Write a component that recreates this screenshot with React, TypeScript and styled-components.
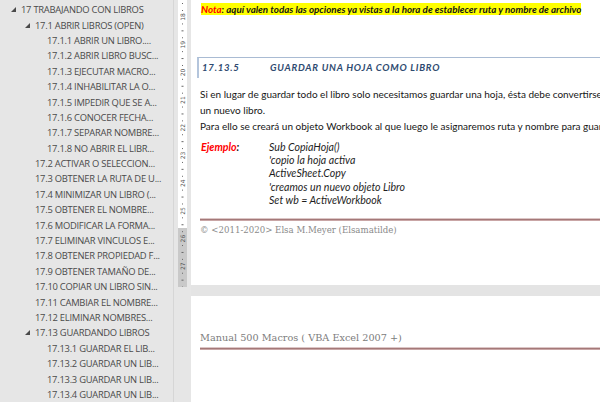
import React from 'react';
import styled, { createGlobalStyle } from 'styled-components';

const GlobalStyle = createGlobalStyle`
  html, body {
    margin: 0;
    padding: 0;
    background: #e6e6e6;
  }
  #root {
    width: 600px;
    height: 402px;
    overflow: hidden;
  }
`;

type NavEntry = { text: string; level: number; open?: boolean };

const navItems: NavEntry[] = [
  { text: '17 TRABAJANDO CON LIBROS', level: 0, open: true },
  { text: '17.1 ABRIR LIBROS (OPEN)', level: 1, open: true },
  { text: '17.1.1 ABRIR UN LIBRO....', level: 2 },
  { text: '17.1.2 ABRIR LIBRO BUSC...', level: 2 },
  { text: '17.1.3 EJECUTAR MACRO...', level: 2 },
  { text: '17.1.4 INHABILITAR LA O...', level: 2 },
  { text: '17.1.5 IMPEDIR QUE SE A...', level: 2 },
  { text: '17.1.6 CONOCER FECHA...', level: 2 },
  { text: '17.1.7 SEPARAR NOMBRE...', level: 2 },
  { text: '17.1.8 NO ABRIR EL LIBR...', level: 2 },
  { text: '17.2 ACTIVAR O SELECCION...', level: 1 },
  { text: '17.3 OBTENER LA RUTA DE U...', level: 1 },
  { text: '17.4 MINIMIZAR UN LIBRO (...', level: 1 },
  { text: '17.5 OBTENER EL NOMBRE...', level: 1 },
  { text: '17.6 MODIFICAR LA FORMA...', level: 1 },
  { text: '17.7 ELIMINAR VINCULOS E...', level: 1 },
  { text: '17.8 OBTENER PROPIEDAD F...', level: 1 },
  { text: '17.9 OBTENER TAMAÑO DE...', level: 1 },
  { text: '17.10 COPIAR UN LIBRO SIN...', level: 1 },
  { text: '17.11 CAMBIAR EL NOMBRE...', level: 1 },
  { text: '17.12 ELIMINAR NOMBRES...', level: 1 },
  { text: '17.13 GUARDANDO LIBROS', level: 1, open: true },
  { text: '17.13.1 GUARDAR EL LIB...', level: 2 },
  { text: '17.13.2 GUARDAR UN LIB...', level: 2 },
  { text: '17.13.3 GUARDAR UN LIB...', level: 2 },
  { text: '17.13.4 GUARDAR UN LIB...', level: 2 }
];

// left edge of the text for each tree level
const textIndent = [21, 35, 47];

const codeLines = [
  'Sub CopiaHoja()',
  "'copio la hoja activa",
  'ActiveSheet.Copy',
  "'creamos un nuevo objeto Libro",
  'Set wb = ActiveWorkbook'
];

const Shell = styled.div`
  display: flex;
  width: 600px;
  height: 402px;
  overflow: hidden;
`;

const NavPane = styled.div`
  width: 173px;
  flex-shrink: 0;
  background: #e6e6e6;
  border-right: 1px solid #d6d6d6;
  padding-top: 2px;
  font-family: 'Open Sans', 'Noto Sans', sans-serif;
  font-size: 9.4px;
  color: #4a4a4a;
`;

const NavRow = styled.div<{ $indent: number }>`
  display: flex;
  align-items: center;
  height: 15.4px;
  padding-left: ${(p) => p.$indent}px;
  white-space: nowrap;
  overflow: hidden;
  letter-spacing: -0.25px;
`;

const Caret = styled.svg`
  width: 5px;
  height: 5px;
  margin-right: 5px;
  flex-shrink: 0;
`;

const RulerColumn = styled.div`
  width: 17px;
  flex-shrink: 0;
  display: flex;
  justify-content: center;
  background: #e6e6e6;
`;

const DocArea = styled.div`
  flex: 1;
  display: flex;
  flex-direction: column;
  gap: 11px;
  background: #e4e4e4;
  min-width: 0;
`;

const Page = styled.div<{ $height: number }>`
  height: ${(p) => p.$height}px;
  background: #ffffff;
  padding: 3px 0 0 9px;
  box-sizing: border-box;
  flex-shrink: 0;
  overflow: hidden;
  font-family: Lato, 'Noto Sans', sans-serif;
  line-height: 12px;
  color: #161616;
`;

const Note = styled.div`
  width: fit-content;
  background: #ffff00;
  font-size: 9.8px;
  line-height: 12px;
  font-weight: 700;
  font-style: italic;
  white-space: nowrap;
  margin-left: 1px;
`;

const Red = styled.span`
  color: #ff0000;
`;

const HeadingBox = styled.div`
  margin: 42px 0 0 -3px;
  height: 20px;
  border-top: 1px solid #a9bbd3;
  border-left: 2px solid #b4c5dc;
  display: flex;
  align-items: center;
  padding-left: 3px;
  color: #2e4a70;
  font-size: 9.6px;
  font-weight: 700;
  font-style: italic;
  letter-spacing: 0.75px;
  white-space: nowrap;
`;

const HeadingNum = styled.span`
  width: 68px;
  flex-shrink: 0;
`;

const Para = styled.p`
  margin: 8px 0 0;
  font-size: 10px;
  line-height: 16px;
  white-space: nowrap;
`;

const Example = styled.div`
  margin-top: 7px;
  display: grid;
  grid-template-columns: 68px 1fr;
  padding-left: 1px;
  font-size: 10.6px;
  line-height: 13.2px;
  font-style: italic;
`;

const ExampleLabel = styled.span`
  font-weight: 700;
`;

const CodeLines = styled.div`
  color: #1e1e1e;
  white-space: nowrap;
`;

const RuleLine = styled.div<{ $top: number }>`
  margin-top: ${(p) => p.$top}px;
  height: 3px;
  background: linear-gradient(#dcc6c6 0 1px, #a47878 1px 2px, #c9a6a6 2px 3px);
`;

const FooterText = styled.div`
  margin-top: 3px;
  font-family: 'DejaVu Serif', 'Liberation Serif', serif;
  font-size: 8.6px;
  line-height: 12px;
  color: #8a8a8a;
  white-space: nowrap;
`;

const HeaderText = styled.div`
  margin-top: 32px;
  font-family: 'DejaVu Serif', 'Liberation Serif', serif;
  font-size: 9.7px;
  line-height: 14px;
  color: #7c7c7c;
  white-space: nowrap;
`;

const Ruler: React.FC = () => {
  const marks: React.ReactNode[] = [];
  for (let n = 18; n <= 27; n++) {
    const y = 17 + (n - 18) * 27.7;
    marks.push(
      <text
        key={'t' + n}
        x={0}
        y={0}
        transform={`translate(6.6 ${y}) rotate(-90)`}
        fontSize="6"
        fontFamily="'DejaVu Sans', sans-serif"
        fill="#555"
        textAnchor="middle"
      >
        {n}
      </text>
    );
    [0.25, 0.5, 0.75].forEach((f, i) => {
      const ty = y + f * 27.7;
      marks.push(
        i === 1 ? (
          <rect key={`m${n}${i}`} x={3.5} y={ty - 0.5} width={2} height={1} fill="#666" />
        ) : (
          <rect key={`m${n}${i}`} x={4} y={ty - 0.5} width={1} height={1} fill="#666" />
        )
      );
    });
  }
  // marks above 18
  [3, 10].forEach((ty) =>
    marks.push(<rect key={'u' + ty} x={4} y={ty} width={1} height={1} fill="#666" />)
  );
  return (
    <svg width="9" height="287" viewBox="0 0 9 287">
      <rect x="0" y="0" width="9" height="228" fill="#ffffff" />
      <rect x="0" y="228" width="9" height="59" fill="#c9c9c9" />
      {marks}
    </svg>
  );
};

const App: React.FC = () => {
  return (
    <>
      <GlobalStyle />
      <Shell>
        <NavPane>
          {navItems.map((item) => (
            <NavRow key={item.text} $indent={textIndent[item.level] - (item.open ? 10 : 0)}>
              {item.open && (
                <Caret viewBox="0 0 5 5">
                  <polygon points="5,0 5,5 0,5" fill="#4a4a4a" />
                </Caret>
              )}
              {item.text}
            </NavRow>
          ))}
        </NavPane>
        <RulerColumn>
          <Ruler />
        </RulerColumn>
        <DocArea>
          <Page $height={285}>
            <Note>
              <Red>Nota</Red>: aquí valen todas las opciones ya vistas a la hora de establecer ruta y
              nombre de archivo
            </Note>
            <HeadingBox>
              <HeadingNum>17.13.5</HeadingNum>
              GUARDAR UNA HOJA COMO LIBRO
            </HeadingBox>
            <Para>
              Si en lugar de guardar todo el libro solo necesitamos guardar una hoja, ésta debe
              convertirse en
              <br />
              un nuevo libro.
              <br />
              Para ello se creará un objeto Workbook al que luego le asignaremos ruta y nombre para
              guardarlo.
            </Para>
            <Example>
              <ExampleLabel>
                <Red>Ejemplo</Red>:
              </ExampleLabel>
              <CodeLines>
                {codeLines.map((l) => (
                  <div key={l}>{l}</div>
                ))}
              </CodeLines>
            </Example>
            <RuleLine $top={11} />
            <FooterText>© &lt;2011-2020&gt; Elsa M.Meyer (Elsamatilde)</FooterText>
          </Page>
          <Page $height={120}>
            <HeaderText>Manual 500 Macros ( VBA Excel 2007 +)</HeaderText>
            <RuleLine $top={2} />
          </Page>
        </DocArea>
      </Shell>
    </>
  );
};

export default App;
